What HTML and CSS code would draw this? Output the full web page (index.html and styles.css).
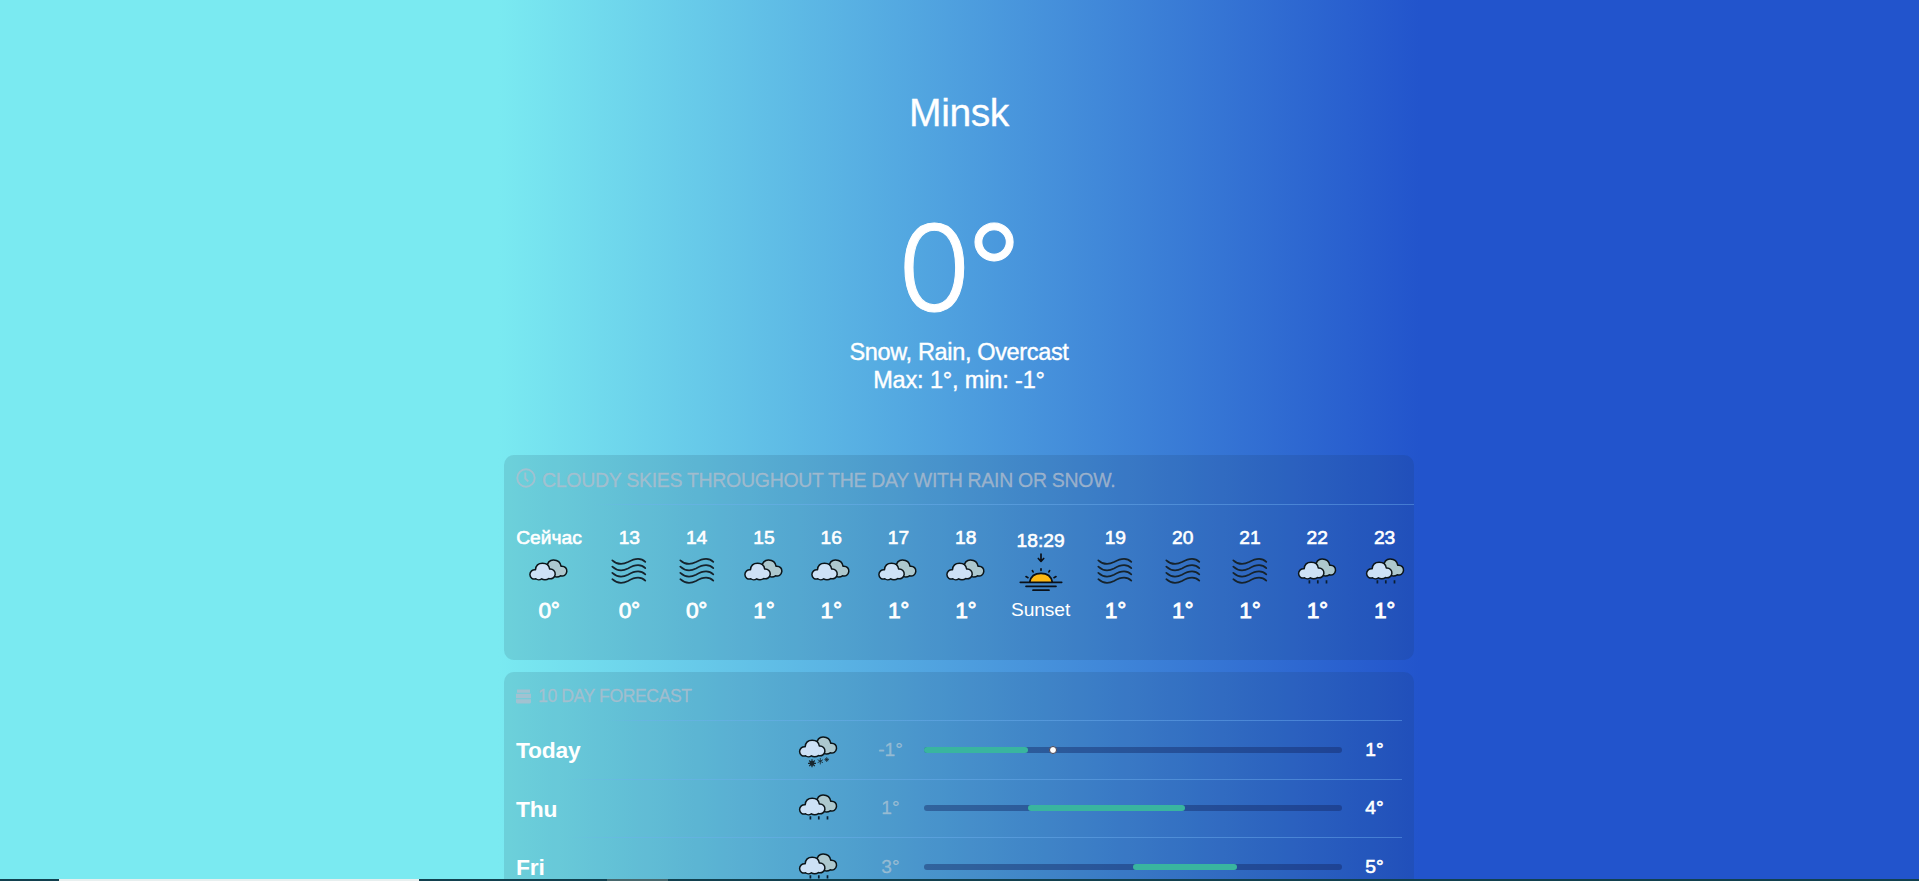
FILE: index.html
```html
<!DOCTYPE html>
<html lang="en">
<head>
<meta charset="utf-8">
<title>Weather</title>
<link rel="stylesheet" href="styles.css">
</head>
<body>
<svg class="sprite" aria-hidden="true">
  <defs>
    <g id="clouds" stroke="#0b1418" stroke-width="1.500" stroke-linejoin="round">
      <path fill="#adc8ce" d="M18.500 16C17.500 11.500 21 8.700 24.500 8.800C29 8.900 31.500 11.500 32 15C36 14.500 38.200 17.500 37.800 20.500C37.300 24 34.500 25.600 31.500 24.600C29.500 26 26 26.200 24 24.500Z"/>
      <path fill="#cde1f6" d="M6.500 18.500C6.800 14.500 9.500 12 13.500 12C17.500 12 20.200 14.300 20.600 17.800C24.200 17.500 26.500 20.200 26.200 23.200C25.900 26.400 23 28.200 19.700 27.400C17.700 28.800 14.300 28.800 12.700 27.600C11 28.800 8.200 28.800 6.800 27.600C4 28.600 .9 26.600 .9 23.400C.9 20.500 3.500 18.100 6.500 18.500Z"/>
    </g>
    <symbol id="cloudy" viewBox="0 0 40 40"><use href="#clouds" y=".2"/></symbol>
    <symbol id="rain" viewBox="0 0 40 40">
      <use href="#clouds" x=".7" y="-.8"/>
      <path stroke="#0b1e30" stroke-width="1.700" d="M12.400 29.300v3.200M20.800 29.300v3.200M29.500 29.300v3.200"/>
    </symbol>
    <symbol id="snow" viewBox="0 0 40 40">
      <use href="#clouds" x=".7" y="-.8"/>
      <g stroke="#17262e" fill="none">
        <path stroke-width="1.200" d="M14 30.300v8M10 34.300h8M11.200 31.500l5.600 5.600M16.800 31.500l-5.600 5.600"/>
        <circle cx="14" cy="34.300" r="2" fill="#17262e"/>
        <path stroke-width=".8" d="M22.300 29v6.400M19.600 30.700l5.400 3M25 30.700l-5.400 3M28.700 28.200v4.800M26.400 30.600h4.600M27.200 29.100l3 3M30.200 29.100l-3 3"/>
      </g>
    </symbol>
    <symbol id="wind" viewBox="0 0 40 40">
      <g fill="none" stroke="#16232c" stroke-width="1.700" stroke-linecap="round">
        <path id="wave" d="M3.300 9.300C8 13.600 13.500 13.900 19 11.100C25 7.600 31 5.600 36.300 10.800"/>
        <use href="#wave" y="6.300"/><use href="#wave" y="12.600"/><use href="#wave" y="18.900"/>
      </g>
    </symbol>
    <symbol id="sunset" viewBox="0 0 44 42">
      <path fill="#fdb813" d="M10.500 30C11.500 24.500 16 21.300 22 21.300S32.500 24.500 33.500 30Z"/>
      <path fill="none" stroke="#0a1018" stroke-width="1.700" stroke-linecap="round" stroke-linejoin="round" d="M22 2v7M19.300 6.500L22 9.300L24.700 6.500M10.700 30C11.700 24.500 16 21.300 22 21.300S32.300 24.500 33.300 30M1.300 30.300H42.700M7 34.300H37M14 38.200H30M22 16.800v1.500M13.400 18.600l.7 1.300M30.600 18.600l-.7 1.300M7 24.600l2 1.100M37 24.600l-2 1.100"/>
    </symbol>
  </defs>
</svg>
<main class="app">
  <section class="current">
    <h1 class="city">Minsk</h1>
    <p class="temperature">0<span class="degree">°</span></p>
    <p class="summary">Snow, Rain, Overcast<br><span class="minmax">Max: 1°, min: -1°</span></p>
  </section>

  <section class="panel">
    <header class="panel-head hourly-head">
      <svg class="clock" viewBox="0 0 20 20"><g fill="none" stroke="currentColor" stroke-width="1.900"><circle cx="10" cy="10" r="8.700"/><path d="M9.300 4.500v6l3 3"/></g></svg>
      <span>CLOUDY SKIES THROUGHOUT THE DAY WITH RAIN OR SNOW.</span>
    </header>
    <ol class="hours">
      <li class="hour now"><b>Сейчас</b><svg><use href="#cloudy"/></svg><strong>0°</strong></li>
      <li class="hour"><b>13</b><svg><use href="#wind"/></svg><strong>0°</strong></li>
      <li class="hour"><b>14</b><svg><use href="#wind"/></svg><strong>0°</strong></li>
      <li class="hour"><b>15</b><svg><use href="#cloudy"/></svg><strong>1°</strong></li>
      <li class="hour"><b>16</b><svg><use href="#cloudy"/></svg><strong>1°</strong></li>
      <li class="hour"><b>17</b><svg><use href="#cloudy"/></svg><strong>1°</strong></li>
      <li class="hour"><b>18</b><svg><use href="#cloudy"/></svg><strong>1°</strong></li>
      <li class="hour sun"><b>18:29</b><svg><use href="#sunset"/></svg><span>Sunset</span></li>
      <li class="hour"><b>19</b><svg><use href="#wind"/></svg><strong>1°</strong></li>
      <li class="hour"><b>20</b><svg><use href="#wind"/></svg><strong>1°</strong></li>
      <li class="hour"><b>21</b><svg><use href="#wind"/></svg><strong>1°</strong></li>
      <li class="hour"><b>22</b><svg><use href="#rain"/></svg><strong>1°</strong></li>
      <li class="hour"><b>23</b><svg><use href="#rain"/></svg><strong>1°</strong></li>
    </ol>
  </section>

  <section class="panel daily">
    <header class="panel-head daily-head">
      <svg class="calendar" viewBox="0 0 15 15"><path fill="currentColor" d="M1 .5h13v3.200H1zM0 4.700h15v4.600H0zM0 10.300h15V13.500l-1 1H1l-1-1z"/></svg>
      <span>10 DAY FORECAST</span>
    </header>
    <ol class="days">
      <li class="day"><span class="name">Today</span><svg><use href="#snow"/></svg><span class="low">-1°</span><span class="track"><i class="range" style="left:0;width:25%"></i><i class="dot" style="left:31%"></i></span><span class="high">1°</span></li>
      <li class="day"><span class="name">Thu</span><svg><use href="#rain"/></svg><span class="low">1°</span><span class="track"><i class="range" style="left:25%;width:37.5%"></i></span><span class="high">4°</span></li>
      <li class="day"><span class="name">Fri</span><svg><use href="#rain"/></svg><span class="low">3°</span><span class="track"><i class="range" style="left:50%;width:25%"></i></span><span class="high">5°</span></li>
    </ol>
  </section>
</main>
<footer class="taskbar"><i class="tab active"></i><i class="tab"></i></footer>
</body>
</html>
```

FILE: styles.css
```css
* { box-sizing: border-box; }

body {
  margin: 0;
  height: 881px;
  overflow: hidden;
  display: flex;
  flex-direction: column;
  font-family: "Liberation Sans", Arial, sans-serif;
  color: #fff;
  background: linear-gradient(90deg, #7aeaf1 498px, #2254cc 1421px);
}

h1, p, ol { margin: 0; padding: 0; font-weight: 400; }
ol { list-style: none; }
svg { display: block; }
.sprite { position: absolute; width: 0; height: 0; }

.app {
  width: 910px;
  height: 879px;
  flex: none;
  margin-left: 504px;
  overflow: hidden;
}

.current {
  height: 455px;
  padding-top: 90px;
  text-align: center;
}
.city {
  font-size: 39px;
  line-height: 45px;
  letter-spacing: -.4px;
  -webkit-text-stroke: .3px #fff;
}
.temperature {
  margin-top: 59px;
  height: 144px;
  font: 300 120px/148px Inter, sans-serif;
  letter-spacing: -4.5px;
  text-indent: -4px;
  -webkit-text-stroke: 1px #fff;
}
.summary {
  font-size: 23.5px;
  line-height: 28px;
  letter-spacing: -.35px;
  -webkit-text-stroke: .4px #fff;
}
.minmax { letter-spacing: -.15px; }

.panel {
  border-radius: 10px;
  background: rgba(25, 45, 70, .13);
  height: 205px;
}
.daily { margin-top: 12px; height: 660px; }

.panel-head {
  display: flex;
  align-items: center;
  color: rgba(180, 190, 205, .75);
  border-bottom: 1px solid;
  border-image: linear-gradient(90deg, transparent 90px, rgba(110, 175, 240, .45) 130px) 1;
}
.hourly-head {
  height: 50px;
  padding: 2px 0 0 12px;
  gap: 6px;
  font-size: 19.5px;
  letter-spacing: -.3px;
  -webkit-text-stroke: .3px;
}
.clock { width: 20px; height: 20px; margin-top: -5px; }

.hours {
  display: flex;
  gap: 27.3px;
  padding: 22px 0 0 12px;
}
.hour {
  flex: none;
  width: 40px;
  display: flex;
  flex-direction: column;
  align-items: center;
  font-size: 19.2px;
  line-height: 22px;
  white-space: nowrap;
}
.now { width: 66px; }
.sun { width: 55px; }
.hour b { font-weight: 400; -webkit-text-stroke: .6px #fff; }
.hour svg { width: 40px; height: 40px; margin-top: 2px; }
.hour strong {
  margin-top: 6px;
  font-size: 22.8px;
  line-height: 26px;
  font-weight: 400;
  letter-spacing: -.3px;
  -webkit-text-stroke: .8px #fff;
}
.sun b { margin-top: 3px; }
.sun svg { width: 44px; height: 42px; margin-top: 0; }
.sun span { margin-top: 5px; letter-spacing: -.1px; }

.daily-head {
  height: 49px;
  margin: 0 12px;
  gap: 7px;
  font-size: 17.6px;
  letter-spacing: -.4px;
  -webkit-text-stroke: .3px;
}
.calendar { width: 15px; height: 15px; }

.days { padding: 0 12px; }
.day {
  height: 58.5px;
  display: flex;
  align-items: center;
  border-bottom: 1px solid;
  border-image: linear-gradient(90deg, transparent 50px, rgba(110, 175, 240, .45) 110px) 1;
  font-size: 19.2px;
}
.name {
  width: 282px;
  font-size: 22.8px;
  font-weight: 700;
  letter-spacing: -.2px;
  padding-top: 2px;
}
.day svg { width: 40px; height: 40px; margin: -2px 0 0 -.5px; }
.low {
  width: 50px;
  margin-left: 28px;
  text-align: center;
  color: rgba(190, 205, 215, .6);
  -webkit-text-stroke: .3px;
}
.track {
  position: relative;
  width: 418px;
  height: 6px;
  margin-left: 8px;
  border-radius: 3px;
  background: rgba(20, 40, 100, .45);
}
.range {
  position: absolute;
  top: 0;
  height: 6px;
  border-radius: 3px;
  background: #39b59f;
}
.dot {
  position: absolute;
  top: -1px;
  width: 8px;
  height: 8px;
  margin-left: -4px;
  border-radius: 50%;
  background: #fff;
  border: 1.5px solid #4a4350;
}
.high {
  width: 40px;
  margin-left: 13px;
  text-align: center;
  -webkit-text-stroke: .6px #fff;
}

.taskbar {
  flex: none;
  display: flex;
  gap: 188px;
  height: 2px;
  padding-left: 59px;
  background: #12414f;
}
.tab { width: 61px; height: 2px; background: #47686d; }
.active { width: 360px; background: #e8efef; }
```
